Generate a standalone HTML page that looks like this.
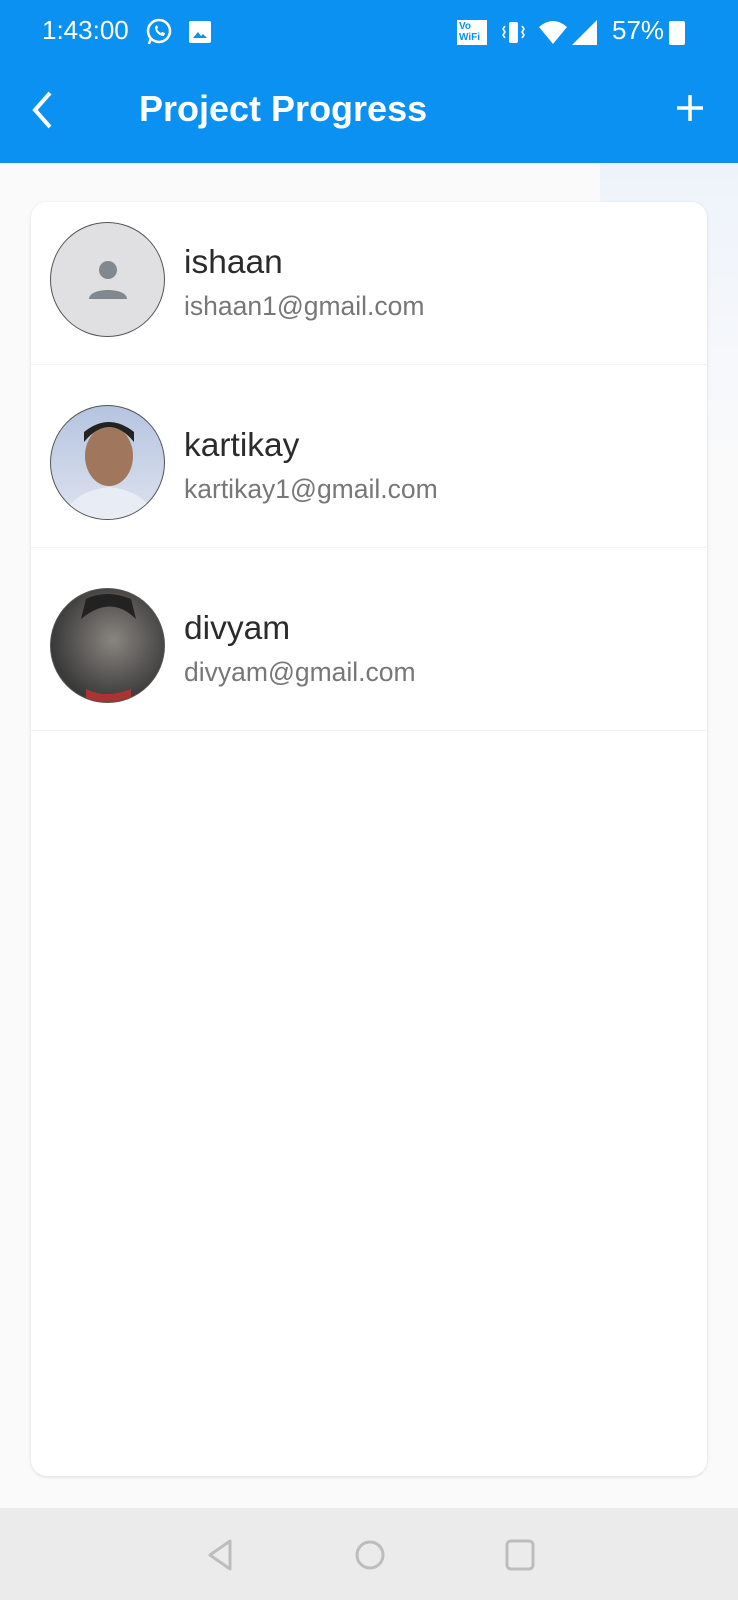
<!DOCTYPE html>
<html><head><meta charset="utf-8"><style>
*{margin:0;padding:0;box-sizing:border-box}
body{width:738px;height:1600px;position:relative;background:#fafafb;font-family:"Liberation Sans",Roboto,sans-serif;overflow:hidden}
.top{position:absolute;left:0;top:0;width:738px;height:163px;background:#0b91f1;color:#fff}
.st{position:absolute;top:15px;font-size:26px}
.title{position:absolute;left:139px;top:88px;font-size:36px;font-weight:bold}
.card{position:absolute;left:31px;top:202px;width:676px;height:1274px;background:#fff;border-radius:16px;box-shadow:0 1px 3px rgba(0,0,0,.12)}
.row{position:absolute;left:0;width:676px;height:183px;border-bottom:1px solid #f2f2f2}
.av{position:absolute;left:19px;top:40px;width:115px;height:115px;border-radius:50%;border:1px solid #555;overflow:hidden}
.nm{position:absolute;left:153px;top:62px;font-size:33.5px;color:#2b2b2b}
.em{position:absolute;left:153px;top:109px;font-size:26.5px;color:#777}
.nav{position:absolute;left:0;top:1508px;width:738px;height:92px;background:#ebebeb}
</style></head><body>
<div style="position:absolute;left:600px;top:163px;width:138px;height:300px;background:linear-gradient(#eef3fb,#fafafb)"></div>
<div class="top">
<div class="st" style="left:42px">1:43:00</div>
<svg style="position:absolute;left:145px;top:18px" width="28" height="28" viewBox="0 0 28 28"><circle cx="14" cy="13" r="11" fill="none" stroke="#fff" stroke-width="2.5"/><path d="M4 26l2-6" stroke="#fff" stroke-width="2.5"/><path d="M10 9c0 5 4 9 9 9l1-3-3-1-1 1c-2-1-3-2-4-4l1-1-1-3z" fill="#fff"/></svg>
<div style="position:absolute;left:189px;top:21px;width:22px;height:22px;background:#fff;border-radius:2px"><svg width="22" height="22"><path d="M4 17l5-6 3 4 2-2 4 4z" fill="#0b91f1"/></svg></div>
<div style="position:absolute;left:457px;top:20px;width:30px;height:25px;background:#fff;color:#0b91f1;font-size:10px;font-weight:bold;line-height:11px;padding:1px 2px">Vo<br>WiFi</div>
<svg style="position:absolute;left:500px;top:20px" width="26" height="26"><rect x="9" y="2" width="9" height="21" rx="2" fill="#fff"/><path d="M5 6l-2 3 2 3-2 3 2 3M22 6l2 3-2 3 2 3-2 3" stroke="#fff" stroke-width="1.6" fill="none"/></svg>
<svg style="position:absolute;left:538px;top:18px" width="30" height="28"><path d="M1 9q14-12 28 0l-14 17z" fill="#fff"/></svg>
<svg style="position:absolute;left:570px;top:18px" width="28" height="28"><path d="M27 2v25H2z" fill="#fff"/></svg>
<div class="st" style="left:612px">57%</div>
<div style="position:absolute;left:669px;top:21px;width:16px;height:24px;background:#fff;border-radius:2px"></div>
<svg style="position:absolute;left:28px;top:90px" width="30" height="40"><path d="M22 3L7 20l15 17" stroke="#fff" stroke-width="4" fill="none"/></svg>
<div class="title">Project Progress</div>
<svg style="position:absolute;left:676px;top:94px" width="28" height="28"><path d="M14 1v26M1 14h26" stroke="#fff" stroke-width="3.5"/></svg>
</div>
<div class="card">
<div class="row" style="top:-20px">
<div class="av" style="background:#e0e0e2"><svg width="115" height="115"><circle cx="57" cy="47" r="9" fill="#818890"/><path d="M38 76c0-12 38-12 38 0z" fill="#818890"/></svg></div>
<div class="nm">ishaan</div><div class="em">ishaan1@gmail.com</div></div>
<div class="row" style="top:163px">
<div class="av" style="background:linear-gradient(#b5c4e0,#dde3ef)"><svg width="115" height="115"><ellipse cx="58" cy="50" rx="24" ry="30" fill="#a0765d"/><path d="M33 36q25-30 50 0v-10q-25-20-50 0z" fill="#222"/><path d="M10 115q10-30 48-34 38 4 48 34z" fill="#e8ecf5"/></svg></div>
<div class="nm">kartikay</div><div class="em">kartikay1@gmail.com</div></div>
<div class="row" style="top:346px">
<div class="av" style="background:radial-gradient(circle at 55% 45%,#8a8580,#3a3a3a 70%)"><svg width="115" height="115"><path d="M30 30q30-25 55 0l-5-20q-25-10-45 0z" fill="#222"/><path d="M35 100q20 10 45 0v15H35z" fill="#a33"/></svg></div>
<div class="nm">divyam</div><div class="em">divyam@gmail.com</div></div>
</div>
<div class="nav">
<svg style="position:absolute;left:204px;top:30px" width="32" height="34"><path d="M26 3L6 17l20 14z" fill="none" stroke="#bdbdbd" stroke-width="3" stroke-linejoin="round"/></svg>
<svg style="position:absolute;left:354px;top:31px" width="32" height="32"><circle cx="16" cy="16" r="13" fill="none" stroke="#bdbdbd" stroke-width="3"/></svg>
<svg style="position:absolute;left:504px;top:30px" width="32" height="34"><rect x="3" y="3" width="26" height="28" rx="4" fill="none" stroke="#bdbdbd" stroke-width="3"/></svg>
</div>
</body></html>
